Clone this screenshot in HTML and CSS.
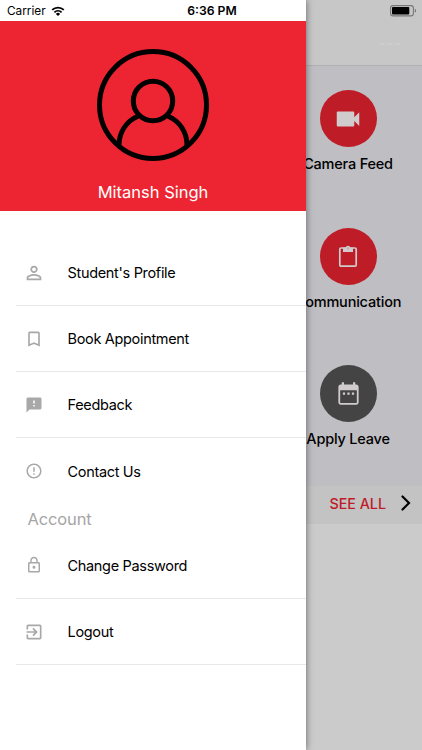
FILE: index.html
```html
<!DOCTYPE html>
<html lang="en">
<head>
<meta charset="utf-8">
<title>Student menu</title>
<link rel="stylesheet" href="styles.css">
</head>
<body>
<div class="app">
  <main class="home">
    <header class="navbar"><span class="more"><i></i><i></i><i></i></span></header>
    <section class="tiles">
      <div class="tile">
        <div class="disc"><svg class="cam" viewBox="0 0 24 24"><path d="M17 10.500V7c0-.55-.45-1-1-1H4c-.55 0-1 .45-1 1v10c0 .55.45 1 1 1h12c.55 0 1-.45 1-1v-3.500l4 4v-11l-4 4z"/></svg></div>
        <span class="label">Camera Feed</span>
      </div>
      <div class="tile">
        <div class="disc"><svg class="clipboard" viewBox="0 0 20 24"><rect class="board" x="1.800" y="4" width="16.400" height="18.200" rx="1.200"/><path fill-rule="evenodd" d="M5 3.500h2.600a2.500 2.500 0 0 1 4.800 0H15V8H5zM10 3.200a1 1 0 1 0 0 2 1 1 0 0 0 0-2z"/></svg></div>
        <span class="label">Communication</span>
      </div>
      <div class="tile">
        <div class="disc dark"><svg class="calendar" viewBox="0 0 24 24"><path d="M9 11H7v2h2v-2zm4 0h-2v2h2v-2zm4 0h-2v2h2v-2zm2-7h-1V2h-2v2H8V2H6v2H5c-1.110 0-1.990.9-1.990 2L3 20c0 1.100.89 2 2 2h14c1.100 0 2-.9 2-2V6c0-1.100-.9-2-2-2zm.4 16.400H4.600V9h14.800v11.400z"/></svg></div>
        <span class="label">Apply Leave</span>
      </div>
    </section>
    <div class="see-all">
      <span>SEE ALL</span>
      <svg viewBox="0 0 10 16"><path d="M1.500 1.500 8 8l-6.500 6.500"/></svg>
    </div>
  </main>

  <aside class="drawer">
    <header class="profile">
      <svg class="avatar" viewBox="0 0 112 112">
        <circle cx="56" cy="56" r="53.500"/>
        <circle cx="56" cy="52" r="19.700"/>
        <path d="M22 96.500c0-13 7-24.500 19.500-29.500M90 96.500c0-13-7-24.500-19.500-29.500"/>
      </svg>
      <span class="name">Mitansh Singh</span>
    </header>
    <nav class="menu">
      <a class="item"><span class="icon"><svg class="person" viewBox="0 0 24 24"><path d="M12 5.900a2.100 2.100 0 1 1 0 4.200 2.100 2.100 0 0 1 0-4.200m0 9c2.970 0 6.100 1.460 6.100 2.100v1.100H5.900V17c0-.64 3.130-2.100 6.100-2.100M12 4C9.790 4 8 5.790 8 8s1.790 4 4 4 4-1.790 4-4-1.790-4-4-4zm0 9c-2.670 0-8 1.340-8 4v3h16v-3c0-2.660-5.330-4-8-4z"/></svg></span>Student's Profile</a>
      <a class="item"><span class="icon"><svg class="wide" viewBox="0 0 24 24"><path d="M17 3H7c-1.100 0-1.990.9-1.990 2L5 21l7-3 7 3V5c0-1.100-.9-2-2-2zm0 15-5-2.180L7 18V5h10v13z"/></svg></span>Book Appointment</a>
      <a class="item"><span class="icon"><svg viewBox="0 0 24 24"><path d="M20 2H4c-1.100 0-1.990.9-1.990 2L2 22l4-4h14c1.100 0 2-.9 2-2V4c0-1.100-.9-2-2-2zm-7 12h-2v-2h2v2zm0-4h-2V6h2v4z"/></svg></span>Feedback</a>
      <a class="item last"><span class="icon"><svg viewBox="0 0 24 24"><path d="M11 15h2v2h-2zm0-8h2v6h-2zm.99-5C6.470 2 2 6.480 2 12s4.470 10 9.990 10C17.520 22 22 17.520 22 12S17.520 2 11.990 2zM12 20c-4.420 0-8-3.580-8-8s3.580-8 8-8 8 3.580 8 8-3.580 8-8 8z"/></svg></span>Contact Us</a>
      <h2 class="group">Account</h2>
      <a class="item"><span class="icon"><svg viewBox="0 0 24 24"><path d="M12 17c1.100 0 2-.9 2-2s-.9-2-2-2-2 .9-2 2 .9 2 2 2zm6-9h-1V6c0-2.760-2.240-5-5-5S7 3.240 7 6v2H6c-1.100 0-2 .9-2 2v10c0 1.100.9 2 2 2h12c1.100 0 2-.9 2-2V10c0-1.100-.9-2-2-2zM8.900 6c0-1.710 1.390-3.100 3.100-3.100s3.100 1.390 3.100 3.100v2H8.900V6zM18 20H6V10h12v10z"/></svg></span>Change Password</a>
      <a class="item"><span class="icon"><svg class="wide" viewBox="0 0 24 24"><path d="M10.090 15.590 11.500 17l5-5-5-5-1.410 1.410L12.670 11H3v2h9.670l-2.580 2.590zM19 3H5c-1.110 0-2 .9-2 2v4h2V5h14v14H5v-4H3v4c0 1.100.89 2 2 2h14c1.100 0 2-.9 2-2V5c0-1.100-.9-2-2-2z"/></svg></span>Logout</a>
    </nav>
  </aside>

  <div class="status">
    <span class="carrier">Carrier
      <svg viewBox="0 0 14 10"><path d="M1.200 3.900a8.300 8.300 0 0 1 11.600 0M3.400 6.300a5.200 5.200 0 0 1 7.200 0"/><path class="dot" d="M7 10 4.900 7.900a3 3 0 0 1 4.200 0z"/></svg>
    </span>
    <span class="time">6:36 PM</span>
    <svg class="battery" viewBox="0 0 27 12"><rect class="shell" x=".6" y=".6" width="22.800" height="10.300" rx="2.500"/><rect x="2" y="2" width="17.300" height="7.500" rx="1"/><path class="tip" d="M24.800 3.800c1.800.5 1.800 3.400 0 3.900z"/></svg>
  </div>
</div>
</body>
</html>
```

FILE: styles.css
```css
* { box-sizing: border-box; }

body {
  margin: 0;
  font-family: Inter, "Liberation Sans", sans-serif;
  color: #000;
}

.app {
  position: relative;
  width: 422px;
  height: 750px;
  overflow: hidden;
  background: #cbcbcb;
}

/* dimmed screen behind the drawer */
.navbar {
  display: flex;
  justify-content: flex-end;
  height: 66px;
  padding: 43px 21px 0 0;
  background: #c7c7c7;
  border-bottom: 1px solid #b0b0b2;
}

.more { display: flex; gap: 2px; }
.more i { width: 6px; height: 2px; border-radius: 1px; background: #cdcdcd; }

.tiles {
  display: flex;
  flex-direction: column;
  align-items: flex-end;
  height: 420px;
  padding: 24px 14px 0 0;
  background: #bfbec3;
}

.tile {
  display: flex;
  flex: none;
  flex-direction: column;
  align-items: center;
  width: 120px;
  height: 137.5px;
}

.tile:last-child { height: 110px; }

.disc {
  display: flex;
  align-items: center;
  justify-content: center;
  width: 57px;
  height: 57px;
  border-radius: 50%;
  background: #be1c27;
}

.disc.dark { background: #444; }
.disc svg { fill: #d0cccd; }
.disc .cam { width: 30px; height: 30px; }
.disc .clipboard { width: 20px; height: 24px; }
.disc .board { fill: none; stroke: #d0cccd; stroke-width: 1.7; }
.disc .calendar { width: 27px; height: 27px; }

.label {
  margin-top: 7px;
  font-size: 14.5px;
  font-weight: 500;
  letter-spacing: -.2px;
  line-height: 20px;
  white-space: nowrap;
}

.see-all {
  display: flex;
  align-items: center;
  justify-content: flex-end;
  gap: 15px;
  height: 38px;
  padding: 0 11px 4px 0;
  background: #c3c3c3;
  color: #be1c27;
  font-size: 14.3px;
  font-weight: 500;
}

.see-all svg {
  width: 10px;
  height: 16px;
  fill: none;
  stroke: #000;
  stroke-width: 2.2;
  stroke-linecap: round;
}

/* drawer */
.drawer {
  position: absolute;
  top: 0;
  left: 0;
  width: 306px;
  height: 750px;
  padding-top: 21px;
  background: #fff;
  box-shadow: 0 0 7px rgba(0, 0, 0, .5);
}

.profile {
  display: flex;
  flex-direction: column;
  align-items: center;
  height: 190px;
  padding-top: 28px;
  background: #ed2532;
}

.avatar {
  width: 112px;
  height: 112px;
  fill: none;
  stroke: #000;
  stroke-width: 5;
}

.name {
  margin-top: 20px;
  color: #fff;
  font-size: 16.5px;
  line-height: 22px;
}

.menu { padding: 29px 0 0 16px; }

.item {
  display: flex;
  align-items: center;
  gap: 22.5px;
  height: 66.15px;
  padding-left: 7px;
  border-bottom: 1px solid #e8e8e8;
  font-size: 14.5px;
  letter-spacing: -.32px;
}

.item.last { height: 65.7px; border-bottom: 0; }

.icon {
  display: flex;
  align-items: center;
  justify-content: center;
  width: 22px;
  height: 22px;
}

.icon svg { width: 18px; height: 18px; fill: #a8a8a8; }
.icon .wide { width: 20px; height: 20px; }
.icon .person { width: 22px; height: 22px; }

.group {
  height: 28.7px;
  margin: 0;
  padding-left: 11.5px;
  color: #a6a6a6;
  font-size: 16.5px;
  font-weight: 400;
  letter-spacing: -.15px;
  line-height: 30px;
}

/* status bar */
.status {
  position: absolute;
  top: 0;
  left: 0;
  display: grid;
  grid-template-columns: 1fr auto 1fr;
  align-items: center;
  width: 422px;
  height: 21px;
  padding: 0 5px 0 7px;
}

.carrier { display: flex; align-items: center; gap: 5px; font-size: 11.8px; }
.carrier svg { width: 14px; height: 10px; fill: none; stroke: #000; stroke-width: 1.8; }
.carrier .dot { fill: #000; stroke: none; }
.time { font-size: 12.2px; font-weight: 600; }
.battery { justify-self: end; width: 27px; height: 12px; }
.battery .shell { fill: none; stroke: #777; stroke-width: 1.1; }
.battery .tip { fill: #777; }
```
